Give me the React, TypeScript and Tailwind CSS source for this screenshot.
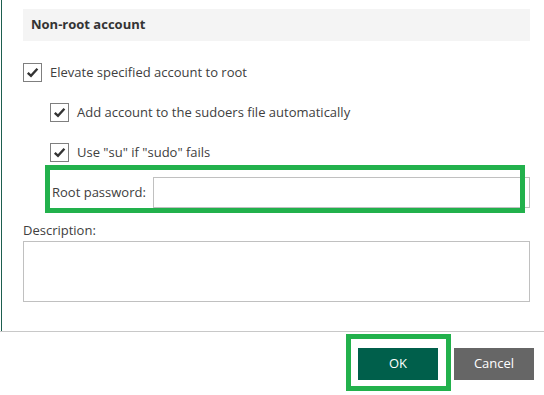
import React from "react";

function Check({ label }: { readonly label: string }) {
  return (
    <label className="flex h-[19px] items-center gap-[8px]">
      <span className="flex h-[19px] w-[19px] shrink-0 items-center justify-center border border-[#7f7f7f] bg-white">
        <svg width="13" height="13" viewBox="0 0 13 13" aria-hidden="true">
          <path d="M1.8 6.8 L5 9.8 L11.4 2.8" fill="none" stroke="#333333" strokeWidth="2.4" />
        </svg>
      </span>
      <span>{label}</span>
    </label>
  );
}

export default function App() {
  return (
    <div className="relative flex h-[395px] w-[544px] flex-col bg-white font-['Open_Sans',sans-serif] text-[13px] text-[#404040]">
      <div className="ml-px flex h-[331px] flex-col border-l border-[#1d5e4f] pl-[21px] pr-[14px] pt-[9px]">
        <div className="flex h-[32px] items-center bg-[#f4f4f4] px-[8px] font-bold text-[#333333]">
          Non-root account
        </div>
        <div className="mt-[22px]">
          <Check label="Elevate specified account to root" />
        </div>
        <div className="mt-[21px] pl-[27px]">
          <Check label="Add account to the sudoers file automatically" />
        </div>
        <div className="mt-[21px] pl-[27px]">
          <Check label={'Use "su" if "sudo" fails'} />
        </div>
        <div className="mt-[15px] flex h-[31px] items-center pl-[29px]">
          <span className="w-[101px] shrink-0">Root password:</span>
          <input type="password" className="h-[31px] flex-1 border border-[#c0c0c0] bg-white outline-none" />
        </div>
        <div className="mt-[12px] leading-[20px]">Description:</div>
        <textarea className="mt-[1px] h-[61px] resize-none border border-[#c0c0c0] bg-white outline-none" />
      </div>
      <div className="flex flex-1 justify-end gap-[16px] border-t border-[#c8c8c8] pr-[10px] pt-[16px]">
        <button type="button" className="h-[32px] w-[80px] bg-[#005f4b] text-white">OK</button>
        <button type="button" className="h-[32px] w-[80px] bg-[#666666] text-white">Cancel</button>
      </div>

      <div className="pointer-events-none absolute left-[45px] top-[165px] h-[48px] w-[480px] border-[5px] border-[#22b14c]" />
      <div className="pointer-events-none absolute left-[346px] top-[334px] h-[57px] w-[105px] border-[5px] border-[#22b14c]" />
    </div>
  );
}
